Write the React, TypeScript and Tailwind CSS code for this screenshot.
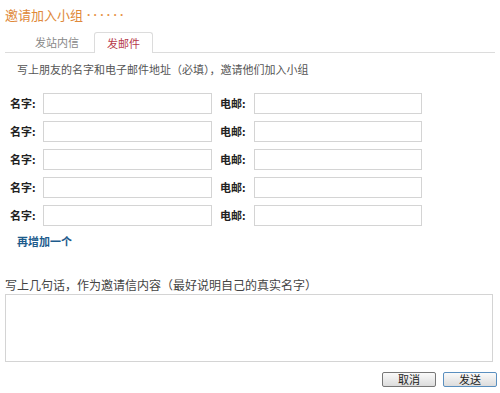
import React from 'react';

const font = { fontFamily: '"Noto Sans CJK SC", "Noto Sans", sans-serif' };

const rows = [0, 1, 2, 3, 4];

export default function App() {
  return (
    <div className="w-[500px] h-[393px] bg-white text-[#333] overflow-hidden" style={font}>
      <div className="pl-[5px] pt-[4px] h-[26px] flex items-center text-[13px] leading-[18px] text-[#e0893a]">
        <span>邀请加入小组</span>
        <span className="ml-[4px] tracking-[2.6px] text-[12px] font-bold text-[#e8954a] font-['Liberation_Sans',sans-serif]">······</span>
      </div>

      <div className="mt-[6px] mx-[5px] h-[21px] flex items-end border-b border-[#dcdcdc] pl-[30px] text-[11px]">
        <div className="w-[44px] h-[20px] flex items-center justify-center text-[#888]">发站内信</div>
        <div className="ml-[15px] w-[59px] h-[21px] -mb-px flex items-center justify-center bg-white border border-b-0 border-[#dcdcdc] rounded-t-[3px] text-[#b73a4a]">
          发邮件
        </div>
      </div>

      <div className="pl-[17px] mt-[9px] h-[14px] leading-[14px] text-[11px] text-[#555]">
        写上朋友的名字和电子邮件地址（必填），邀请他们加入小组
      </div>

      <div className="mt-[17px] flex flex-col gap-[7px]">
        {rows.map((r) => (
          <div key={r} className="flex items-center h-[21px] pl-[10px]">
            <span className="w-[33px] text-[11px] font-bold text-[#222]">名字:</span>
            <input className="w-[169px] h-[21px] border border-[#d4d4d4] outline-none" />
            <span className="ml-[8px] w-[34px] text-[11px] font-bold text-[#222]">电邮:</span>
            <input className="w-[168px] h-[21px] border border-[#d4d4d4] outline-none" />
          </div>
        ))}
      </div>

      <div className="pl-[17px] mt-[8px] h-[14px] leading-[14px] text-[11px] font-bold text-[#1d5b8c]">再增加一个</div>

      <div className="pl-[5px] mt-[30px] h-[14px] leading-[14px] text-[12px] text-[#444]">
        写上几句话，作为邀请信内容（最好说明自己的真实名字）
      </div>

      <div className="mx-[5px] mt-[2px] w-[488px]">
        <textarea className="block w-full h-[68px] border border-[#d4d4d4] outline-none resize-none" />
      </div>

      <div className="flex justify-end gap-[7px] pr-[3px] mt-[10px]">
        <button className="w-[54px] h-[15px] flex items-center justify-center text-[11px] leading-none text-[#222] border border-[#777] rounded-[2px] bg-gradient-to-b from-[#fafafa] to-[#dcdcdc]">
          取消
        </button>
        <button className="w-[54px] h-[15px] flex items-center justify-center text-[11px] leading-none text-[#222] border border-[#5a8fbf] rounded-[2px] bg-gradient-to-b from-[#fafafa] to-[#dcdcdc]">
          发送
        </button>
      </div>
    </div>
  );
}
